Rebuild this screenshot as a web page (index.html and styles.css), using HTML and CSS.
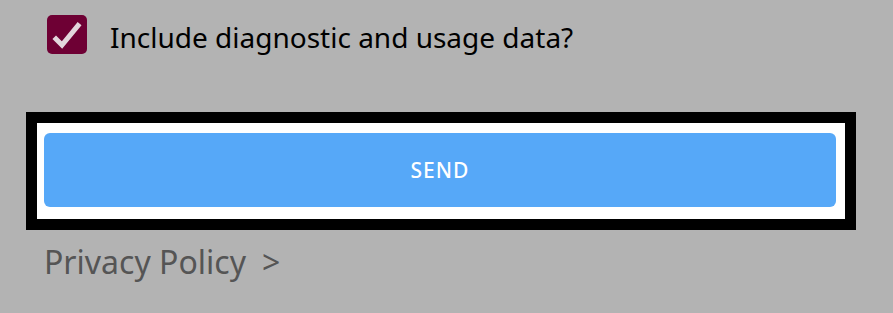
FILE: index.html
```html
<!DOCTYPE html>
<html>
<head>
<meta charset="utf-8">
<link rel="stylesheet" href="styles.css">
</head>
<body>
<div class="page">
  <label class="consent">
    <span class="checkbox">
      <svg viewBox="0 0 40 39" width="40" height="39"><path d="M9 24 L15 30 L31 10.5" fill="none" stroke="#e3d6dc" stroke-width="5" stroke-linecap="square" stroke-linejoin="miter"/></svg>
    </span>
    <span class="consent-text">Include diagnostic and usage data?</span>
  </label>
  <div class="highlight">
    <button class="send">SEND</button>
  </div>
  <a class="privacy" href="#"><span>Privacy Policy</span><span class="chev">&gt;</span></a>
</div>
</body>
</html>
```
FILE: styles.css
```css
html, body {
  margin: 0;
  padding: 0;
  background: #b3b3b3;
  font-family: "Noto Sans", "Open Sans", sans-serif;
}
.page {
  display: flex;
  flex-direction: column;
  align-items: flex-start;
  padding: 15px 0 0 26px;
}
.consent {
  display: flex;
  align-items: flex-start;
  margin-left: 21px;
  gap: 23px;
  height: 39px;
}
.checkbox {
  width: 40px;
  height: 39px;
  border-radius: 5px;
  background: #6e0034;
  display: block;
  flex: none;
}
.checkbox svg { display: block; }
.consent-text {
  font-size: 28px;
  color: #000;
  line-height: 39px;
  margin-top: 3px;
  white-space: nowrap;
}
.highlight {
  margin-top: 58px;
  width: 808px;
  height: 96px;
  border: 11px solid #000;
  background: #fff;
  box-sizing: content-box;
  padding: 0;
  display: flex;
}
.send {
  margin: 10px 0 0 7px;
  width: 792px;
  height: 74px;
  border: none;
  border-radius: 6px;
  background: #56a8f8;
  color: #fff;
  font-family: "Noto Sans", "Open Sans", sans-serif;
  font-size: 21px;
  font-weight: 500;
  letter-spacing: 1px;
  padding: 0;
}
.privacy {
  margin: 10px 0 0 18px;
  font-size: 32px;
  color: #555;
  text-decoration: none;
  display: flex;
  gap: 16px;
  line-height: 44px;
}
```
